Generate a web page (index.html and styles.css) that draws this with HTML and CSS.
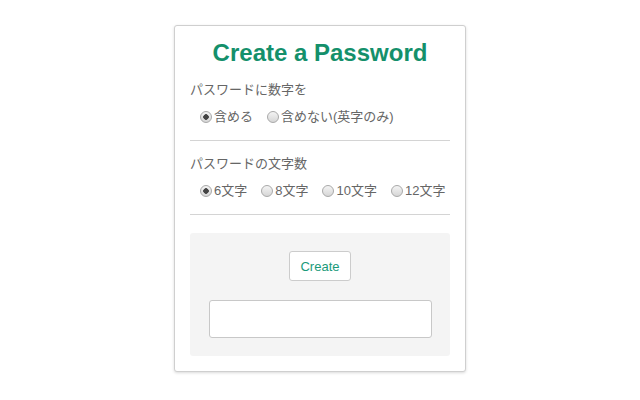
FILE: index.html
```html
<html>

<head>
    <title>Create a Password</title>
    <link rel="stylesheet" href="styles.css">
</head>

<body>

    <div class="card">
        <h1>Create a Password</h1>

        <p class="label">パスワードに数字を</p>
        <div class="options">
            <label><input type="radio" name="digits" checked>含める</label>
            <label><input type="radio" name="digits">含めない(英字のみ)</label>
        </div>

        <hr>

        <p class="label">パスワードの文字数</p>
        <div class="options">
            <label><input type="radio" name="length" checked>6文字</label>
            <label><input type="radio" name="length">8文字</label>
            <label><input type="radio" name="length">10文字</label>
            <label><input type="radio" name="length">12文字</label>
        </div>

        <hr>

        <div class="result">
            <button class="create">Create</button>
            <input class="output" type="text">
        </div>
    </div>

</body>

</html>
```

FILE: styles.css
```css
body {
    margin: 0;
    font-family: "Liberation Sans", "Noto Sans CJK JP", sans-serif;
    color: #666;
    background: #fff;
}

.card {
    width: 260px;
    margin: 25px auto 0;
    padding: 15px 15px 15px;
    border: 1px solid #cfcfcf;
    border-radius: 3px;
    box-shadow: 0 1px 3px rgba(0, 0, 0, 0.15);
    background: #fff;
}

h1 {
    margin: 0 0 15px;
    font-size: 24px;
    line-height: 24px;
    text-align: center;
    color: #14906b;
}

.label {
    margin: 0 0 7px;
    font-size: 13px;
    line-height: 20px;
}

.options {
    display: flex;
    gap: 14px;
    padding-left: 10px;
    font-size: 13px;
    line-height: 20px;
    white-space: nowrap;
}

.options label {
    display: flex;
    align-items: center;
}

.options input {
    appearance: none;
    width: 12px;
    height: 12px;
    margin: 0 2px 0 0;
    border: 1px solid #a9a9a9;
    border-radius: 50%;
    background: linear-gradient(#f4f4f4, #d6d6d6);
}

.options input:checked {
    background: radial-gradient(circle, #444 0 2.5px, transparent 3px), linear-gradient(#f4f4f4, #d6d6d6);
}

hr {
    margin: 13px 0 13px;
    border: 0;
    border-top: 1px solid #d4d4d4;
}

hr:last-of-type {
    margin-bottom: 18px;
}

.result {
    display: flex;
    flex-direction: column;
    align-items: center;
    gap: 19px;
    padding: 18px;
    background: #f4f4f4;
    border-radius: 3px;
}

.create {
    width: 62px;
    height: 30px;
    padding: 0;
    font-family: inherit;
    font-size: 13px;
    color: #1a9a7a;
    background: #fff;
    border: 1px solid #ccc;
    border-radius: 3px;
}

.output {
    width: 223px;
    height: 38px;
    box-sizing: border-box;
    border: 1px solid #c8c8c8;
    border-radius: 3px;
    background: #fff;
}
```
